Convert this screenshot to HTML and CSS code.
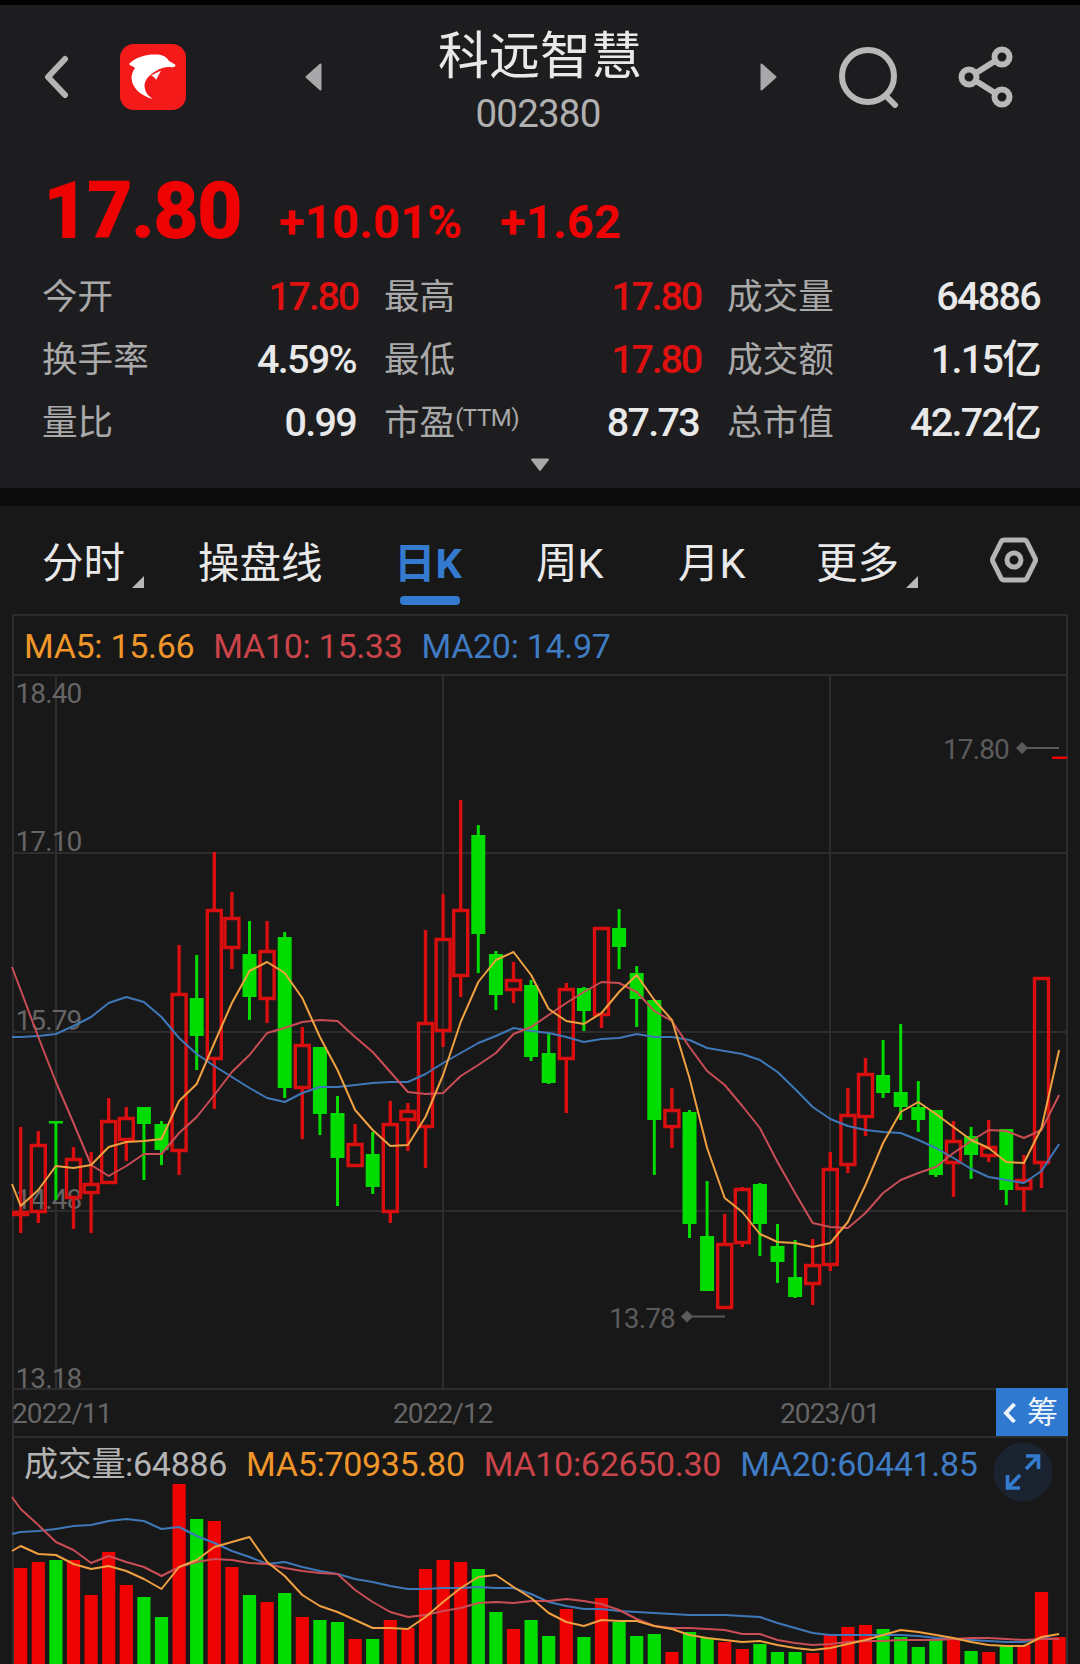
FILE: index.html
```html
<!DOCTYPE html>
<html lang="zh-CN">
<head>
    <meta charset="UTF-8">
    <meta name="viewport" content="width=device-width, initial-scale=1.0">
    <title>科远智慧 002380</title>
    <link rel="stylesheet" href="styles.css">
</head>
<body>

    <section class="quote">
        <header class="topbar">
            <svg class="back" width="26" height="44" viewBox="0 0 26 44"><path d="M21 4 L4 22 L21 40"/></svg>
            <svg class="logo" width="66" height="66" viewBox="0 0 66 66">
                <rect width="66" height="66" rx="14"/>
                <path class="dolphin" d="M9 20 C16 13 25 10.500 35 10.500 C42 10.500 46 12 49 17 C52 19 55 20 55.500 21 C55.500 23 53 23.500 50 23 C44 23 41 24 36 27 C29 31 24.500 36 24.500 42 C25 48 28 52 33 55 C21 52 12 44 11.500 34 C11.500 30 13 27 15 24 C13 22 10.500 22 9 20 Z"/>
                <path class="dolphin" d="M31 31.500 L41 26.500 L36 36 Q35 33 31 31.500 Z"/>
            </svg>
            <svg class="arrow" width="17" height="28" viewBox="0 0 17 28"><path d="M15.500 1.500 V26.500 L1.500 14 Z"/></svg>
            <div class="title">
                <h1>科远智慧</h1>
                <p>002380</p>
            </div>
            <svg class="arrow" width="17" height="28" viewBox="0 0 17 28"><path d="M1.500 1.500 V26.500 L15.500 14 Z"/></svg>
            <svg class="search" width="60" height="62" viewBox="0 0 60 62"><circle cx="29" cy="30" r="26"/><path d="M47 50 L56 59"/></svg>
            <svg class="share" width="56" height="64" viewBox="0 0 56 64">
                <circle cx="11" cy="32" r="7.500"/><circle cx="44" cy="12" r="7.500"/><circle cx="44" cy="52" r="7.500"/>
                <path d="M18 28 L37 16 M18 36 L37 48"/>
            </svg>
        </header>

        <div class="price">
            <strong>17.80</strong>
            <span class="percent">+10.01%</span>
            <span>+1.62</span>
        </div>

        <dl class="stats">
            <div><dt>今开</dt><dd class="up">17.80</dd></div>
            <div><dt>最高</dt><dd class="up">17.80</dd></div>
            <div><dt>成交量</dt><dd>64886</dd></div>
            <div><dt>换手率</dt><dd>4.59%</dd></div>
            <div><dt>最低</dt><dd class="up">17.80</dd></div>
            <div><dt>成交额</dt><dd>1.15亿</dd></div>
            <div><dt>量比</dt><dd>0.99</dd></div>
            <div><dt>市盈<sup>(TTM)</sup></dt><dd>87.73</dd></div>
            <div><dt>总市值</dt><dd>42.72亿</dd></div>
        </dl>
        <svg class="more" width="20" height="14" viewBox="0 0 20 14"><path d="M2 1.500 H18 L10 12 Z"/></svg>
    </section>

    <nav class="tabs">
        <a class="drop">分时</a>
        <a>操盘线</a>
        <a class="active">日K</a>
        <a>周K</a>
        <a>月K</a>
        <a class="drop">更多</a>
        <svg width="50" height="48" viewBox="0 0 50 48">
            <path d="M15 4 H35 Q37 4 38 6 L46 22 Q47 24 46 26 L38 42 Q37 44 35 44 H15 Q13 44 12 42 L4 26 Q3 24 4 22 L12 6 Q13 4 15 4 Z"/>
            <circle cx="25" cy="24" r="7"/>
        </svg>
    </nav>

    <main class="chart">
        <div class="legend">
            <span class="ma5">MA5: 15.66</span>
            <span class="ma10">MA10: 15.33</span>
            <span class="ma20">MA20: 14.97</span>
        </div>

        <svg id="kline" width="1056" height="712" viewBox="12 676 1056 712">
            <path class="grid" d="M12 853 H1068 M12 1032 H1068 M12 1211 H1068 M56 676 V1388 M443 676 V1388 M830 676 V1388"/>
            <g class="axis">
                <text x="15.500" y="702.500">18.40</text>
                <text x="15.500" y="850.500">17.10</text>
                <text x="15.500" y="1029.500">15.79</text>
                <text x="15.500" y="1208.500">14.48</text>
                <text x="15.500" y="1387.500">13.18</text>
            </g>
            <g class="mark">
                <text x="609" y="1327.500">13.78</text>
                <path d="M681 1316.500 l6 -6 l6 6 l-6 6 Z M687 1315.500 H725 v2 H687 Z"/>
                <text x="943" y="758.500">17.80</text>
                <path d="M1016 748 l6 -6 l6 6 l-6 6 Z M1021 747 H1059 v2 H1021 Z"/>
            </g>
        </svg>

        <div class="dates">
            <span>2022/11</span>
            <span>2022/12</span>
            <span>2023/01</span>
            <button class="chips">
                <svg width="14" height="22" viewBox="0 0 14 22"><path d="M11.500 2 L3 11 L11.500 20"/></svg>筹
            </button>
        </div>

        <div class="volume">
            <div class="legend">
                <span>成交量:64886</span>
                <span class="ma5">MA5:70935.80</span>
                <span class="ma10">MA10:62650.30</span>
                <span class="ma20">MA20:60441.85</span>
            </div>
            <svg id="vol" width="1056" height="184" viewBox="12 1480 1056 184"></svg>
            <svg class="expand" width="60" height="60" viewBox="0 0 60 60">
                <circle cx="30" cy="30" r="29.500"/>
                <path d="M33 14 H45.500 V27 M45.500 14 L33 27 M14.500 33 V46 H27 M14.500 46 L27 33"/>
            </svg>
        </div>
    </main>

    <script src="chart.js"></script>
</body>
</html>
```

FILE: styles.css
```css
* {
    box-sizing: border-box;
}

body {
    margin: 0;
    width: 1080px;
    height: 1664px;
    overflow: hidden;
    border-top: 5px solid #000;
    background-color: #181818;
    color: #e9e9ea;
    font-family: Roboto, "Noto Sans CJK SC", sans-serif;
}

svg {
    display: block;
    fill: none;
}

h1, p, dl, dd {
    margin: 0;
}

.quote {
    height: 483px;
    background-color: #1d1d1f;
}

.topbar {
    display: grid;
    grid-template-columns: 76px 185px 17px 438px 79px 119px 56px;
    align-items: center;
    height: 153px;
    padding: 0 0 9px 44px;
}

.back {
    stroke: #b4b4b5;
    stroke-width: 6;
    stroke-linecap: round;
    stroke-linejoin: round;
}

.logo rect {
    fill: #f51a1a;
}

.logo .dolphin {
    fill: #fff;
}

.arrow path, .more path {
    fill: #a8a8aa;
    stroke: #a8a8aa;
    stroke-width: 2;
    stroke-linejoin: round;
}

.title {
    text-align: center;
    padding-right: 2px;
}

.title h1 {
    padding-top: 10px;
    font-size: 51px;
    font-weight: 400;
    line-height: 60px;
}

.title p {
    margin: 3px 4px 0 0;
    color: #b0b0b1;
    font-size: 38.5px;
    line-height: 48px;
    letter-spacing: -0.8px;
}

.search {
    stroke: #b8b8b9;
    stroke-width: 6;
    stroke-linecap: round;
}

.share {
    stroke: #b8b8b9;
    stroke-width: 6;
}

.price {
    display: flex;
    align-items: baseline;
    height: 103px;
    padding-left: 43px;
    color: #ee0202;
    font-size: 47px;
    font-weight: 700;
    line-height: 106px;
    letter-spacing: 0.2px;
}

.price strong {
    width: 236px;
    font-size: 79px;
    letter-spacing: -1.8px;
}

.percent {
    width: 221px;
}

.stats {
    display: grid;
    grid-template-columns: 316px 317px 315px;
    grid-auto-rows: 63px;
    column-gap: 26px;
    padding: 4px 0 0 42px;
}

.stats div {
    display: flex;
    justify-content: space-between;
    line-height: 64px;
}

.stats dt {
    color: #a9a9aa;
    font-size: 35.6px;
    white-space: nowrap;
}

.stats sup {
    font-size: 24px;
    line-height: 0;
    letter-spacing: -0.5px;
    vertical-align: 9px;
}

.stats dd {
    padding-right: 2px;
    font-size: 39.5px;
    font-weight: 500;
    letter-spacing: -1.7px;
}

.stats .up {
    padding-right: 0;
    color: #de1010;
    letter-spacing: -2.2px;
}

.more {
    margin: 4px auto 0;
}

.tabs {
    display: grid;
    grid-template-columns: 156px 196px 142px 142px 138px 173px 50px;
    height: 126px;
    padding: 18px 0 0 42px;
    border-top: 18px solid #0c0c0c;
    font-size: 41.5px;
    line-height: 79px;
}

.tabs a {
    position: relative;
    justify-self: start;
    height: 77px;
}

.tabs .active {
    color: #347bd0;
    font-weight: 700;
}

.tabs .active::after {
    content: "";
    position: absolute;
    left: 6px;
    bottom: -4px;
    width: 60px;
    height: 9px;
    border-radius: 4px;
    background-color: #347bd0;
}

.tabs .drop::after {
    content: "";
    position: absolute;
    right: -19px;
    bottom: 13px;
    border-left: 12px solid transparent;
    border-bottom: 12px solid #b8b8b9;
}

.tabs svg {
    margin-top: 12px;
    stroke: #b4b4b5;
    stroke-width: 5;
}

.chart {
    width: 1056px;
    height: 1050px;
    margin-left: 12px;
    border: 2px solid #2d2d2e;
    border-bottom: 0;
}

.legend {
    display: flex;
    gap: 19px;
    height: 60px;
    padding-left: 10px;
    border-bottom: 2px solid #2d2d2e;
    font-size: 34px;
    line-height: 60px;
    letter-spacing: -0.3px;
    white-space: nowrap;
}

.ma5 {
    color: #f0962a;
}

.ma10 {
    color: #cb444a;
}

.ma20 {
    color: #3f7cc4;
}

#kline, #vol {
    margin-left: -2px;
    overflow: visible;
}

.grid {
    stroke: #2d2d2e;
    stroke-width: 2;
}

.axis, .mark {
    fill: #656566;
    font-size: 28px;
    letter-spacing: -0.9px;
}

.mark {
    fill: #5b5b5c;
}

.bar-up {
    fill: #ee0202;
}

.bar-down {
    fill: #00dc00;
}

.candle-up {
    stroke: #d80e0f;
    stroke-width: 3.4;
}

.candle-down {
    fill: #00dc00;
}

.line5, .line10, .line20 {
    stroke: #f0a040;
    stroke-width: 2;
    stroke-linejoin: round;
}

.line10 {
    stroke: #c94d55;
}

.line20 {
    stroke: #3f78b8;
}

.dates {
    display: grid;
    grid-template-columns: 381px 387px 216px 72px;
    width: 1056px;
    height: 50px;
    margin-left: -2px;
    border-top: 2px solid #2d2d2e;
    border-bottom: 2px solid #2d2d2e;
    color: #656566;
    font-size: 28px;
    line-height: 47px;
    letter-spacing: -0.9px;
}

.chips {
    display: flex;
    align-items: center;
    gap: 10px;
    height: 48px;
    width: 72px;
    margin-top: -2px;
    padding: 2px 0 0 7px;
    border: 0;
    background-color: #2f79d0;
    color: #eef4fb;
    font-family: inherit;
    font-size: 31px;
    line-height: 46px;
}

.chips svg {
    flex: none;
    stroke: #eef4fb;
    stroke-width: 4;
}

.volume {
    position: relative;
    color: #b4b4b5;
}

.volume .legend {
    height: 42px;
    border-bottom: 0;
    line-height: 53px;
}

.expand {
    position: absolute;
    top: 4px;
    right: 13px;
    stroke: #347bd0;
    stroke-width: 3.6;
}

.expand circle {
    fill: #1b2330;
    stroke: none;
}
```

FILE: chart.js
```javascript
const STEP = 17.6;
const FIRST = 20.7;

// high, body top, body bottom, low, direction (1 = up)
const candles = [
    [1127, 1211, 1216, 1233, 1], [1131, 1144, 1213, 1223, 1], [1121, 1121, 1123.5, 1200, 0],
    [1147, 1158, 1199, 1229, 1], [1152, 1183, 1194, 1233, 1], [1098, 1120, 1184, 1184, 1],
    [1107, 1117, 1141, 1161, 1], [1107, 1107, 1124, 1180, 0], [1121, 1124, 1150, 1165, 0],
    [945, 993, 1152, 1175, 1], [955, 998, 1036, 1070, 0], [852, 909, 1060, 1109, 1],
    [892, 917, 949, 969, 1], [921, 954, 997, 1020, 0], [921, 950, 1000, 1023, 1],
    [932, 937, 1088, 1098, 0], [1027, 1044, 1089, 1139, 1], [1047, 1047, 1114, 1135, 0],
    [1096, 1113, 1158, 1206, 0], [1124, 1143, 1167, 1167, 1], [1132, 1154, 1187, 1194, 0],
    [1101, 1123, 1213, 1223, 1], [1103, 1110, 1121, 1151, 1], [930, 1022, 1128, 1168, 1],
    [894, 938, 1032, 1047, 1], [800, 909, 977, 997, 1], [825, 835, 934, 973, 0],
    [951, 954, 995, 1010, 0], [962, 979, 991, 1003, 1], [980, 985, 1057, 1061, 0],
    [1033, 1053, 1083, 1084, 0], [983, 988, 1060, 1113, 1], [987, 988, 1011, 1031, 0],
    [927, 927, 1016, 1028, 1], [909, 928, 947, 969, 0], [966, 973, 999, 1027, 0],
    [1000, 1000, 1120, 1175, 0], [1088, 1109, 1128, 1148, 1], [1110, 1112, 1224, 1238, 0],
    [1181, 1236, 1291, 1291, 0], [1214, 1243, 1309, 1309, 1], [1187, 1188, 1244, 1247, 1],
    [1183, 1184, 1224, 1256, 0], [1224, 1246, 1262, 1283, 0], [1240, 1277, 1297, 1298, 0],
    [1239, 1264, 1285, 1305, 1], [1152, 1168, 1266, 1271, 1], [1088, 1114, 1166, 1173, 1],
    [1058, 1073, 1118, 1136, 1], [1040, 1075, 1093, 1098, 0], [1024, 1092, 1107, 1120, 0],
    [1081, 1107, 1120, 1132, 0], [1110, 1110, 1175, 1177, 0], [1121, 1140, 1164, 1197, 1],
    [1127, 1136, 1155, 1179, 0], [1120, 1146, 1157, 1162, 1], [1129, 1129, 1190, 1205, 0],
    [1155, 1179, 1190, 1212, 1], [977, 977, 1164, 1188, 1], [757, 757, 758, 758, 1]
];

const volumes = [
    1568, 1562, 1560, 1560, 1595, 1552, 1585, 1597, 1617, 1484, 1519, 1521, 1567, 1595, 1602,
    1593, 1617, 1620, 1622, 1639, 1639, 1620, 1628, 1569, 1560, 1562, 1569, 1612, 1629, 1620,
    1636, 1609, 1637, 1598, 1622, 1636, 1634, 1652, 1632, 1638, 1642, 1649, 1644, 1652, 1652,
    1653, 1635, 1627, 1625, 1629, 1637, 1647, 1640, 1640, 1651, 1652, 1646, 1645, 1592, 1637
];

// the first value of every average lies on the left border
const priceLines = {
    line20: [1037, 1037, 1036, 1034, 1026, 1017, 1003, 997, 1002, 1017, 1038, 1054, 1066, 1077, 1088,
        1098, 1102, 1093, 1087, 1087, 1085, 1083, 1082, 1082, 1074, 1063, 1053, 1043, 1036, 1028, 1031,
        1033, 1037, 1042, 1039, 1038, 1034, 1037, 1037, 1040, 1048, 1051, 1054, 1060, 1072, 1089,
        1107, 1119, 1126, 1130, 1132, 1133, 1140, 1148, 1158, 1169, 1177, 1180, 1183, 1171, 1144],
    line10: [967, 990, 1037, 1082, 1123, 1165, 1176, 1166, 1154, 1154, 1133, 1117, 1095, 1072, 1055,
        1033, 1028, 1022, 1020, 1021, 1037, 1052, 1072, 1092, 1094, 1093, 1076, 1065, 1053, 1034, 1027,
        1015, 1003, 992, 982, 983, 992, 1011, 1021, 1047, 1071, 1085, 1106, 1128, 1162, 1193,
        1223, 1227, 1228, 1213, 1193, 1180, 1173, 1167, 1153, 1141, 1130, 1131, 1138, 1130, 1095],
    line5: [1184, 1206, 1190, 1166, 1168, 1165, 1147, 1142, 1141, 1139, 1101, 1084, 1043, 1003, 971,
        962, 973, 998, 1037, 1070, 1110, 1130, 1146, 1145, 1117, 1075, 1022, 982, 960, 952, 975,
        1009, 1021, 1024, 1013, 992, 975, 1000, 1020, 1078, 1148, 1198, 1212, 1234, 1242, 1243,
        1247, 1243, 1222, 1185, 1143, 1112, 1102, 1114, 1127, 1140, 1148, 1162, 1163, 1128, 1050]
};

const volumeLines = {
    line20: [1534, 1532, 1531, 1529, 1526, 1525, 1521, 1519, 1521, 1529, 1527, 1536, 1543, 1551, 1557,
        1564, 1562, 1567, 1571, 1574, 1579, 1582, 1586, 1589, 1589, 1588, 1588, 1587, 1588, 1588, 1594,
        1602, 1606, 1609, 1609, 1611, 1612, 1613, 1614, 1615, 1615, 1615, 1616, 1617, 1623, 1628,
        1633, 1635, 1635, 1635, 1635, 1635, 1636, 1638, 1639, 1640, 1641, 1642, 1642, 1638, 1639],
    line10: [1497, 1509, 1525, 1542, 1550, 1563, 1556, 1562, 1567, 1576, 1567, 1562, 1559, 1560, 1563,
        1564, 1568, 1571, 1573, 1574, 1590, 1602, 1612, 1617, 1615, 1611, 1608, 1603, 1602, 1603, 1601,
        1601, 1599, 1601, 1604, 1610, 1619, 1626, 1628, 1628, 1629, 1630, 1634, 1634, 1640, 1643,
        1645, 1644, 1642, 1641, 1641, 1640, 1640, 1640, 1639, 1638, 1638, 1639, 1640, 1639, 1639],
    line5: [1551, 1546, 1554, 1555, 1564, 1569, 1566, 1571, 1579, 1589, 1567, 1560, 1547, 1542, 1537,
        1562, 1576, 1595, 1606, 1612, 1620, 1628, 1628, 1629, 1617, 1602, 1588, 1577, 1575, 1587, 1598,
        1613, 1622, 1626, 1620, 1621, 1621, 1626, 1629, 1635, 1638, 1640, 1642, 1641, 1645, 1648,
        1650, 1648, 1644, 1640, 1635, 1630, 1632, 1635, 1638, 1642, 1645, 1646, 1646, 1637, 1634]
};

const kline = document.getElementById('kline');
const vol = document.getElementById('vol');

function addPath(svg, className, d) {
    const path = document.createElementNS('http://www.w3.org/2000/svg', 'path');
    path.setAttribute('class', className);
    path.setAttribute('d', d);
    svg.appendChild(path);
}

function box(x, top, width, bottom) {
    return `M${x} ${top} h${width} V${bottom} h${-width} Z`;
}

function drawLines(svg, lines) {
    for (const name in lines) {
        const points = lines[name].map((y, i) => `${i === 0 ? 12 : FIRST + (i - 1) * STEP} ${y}`);
        addPath(svg, name, 'M' + points.join(' L'));
    }
}

candles.forEach(([high, top, bottom, low, up], i) => {
    const x = FIRST + i * STEP;
    if (high === 757) {
        addPath(kline, 'bar-up', box(x - 7, 756.5, 15, 759));
    } else if (up) {
        addPath(kline, 'candle-up', box(x - 7, top + 1.5, 14, bottom - 1.5) +
            `M${x} ${high} V${top} M${x} ${bottom} V${low}`);
    } else {
        addPath(kline, 'candle-down', box(x - 7, top, 14, bottom) + box(x - 1.5, high, 3, low));
    }
    addPath(vol, up ? 'bar-up' : 'bar-down', box(x - 6.6, volumes[i], 13.2, 1664));
});

drawLines(kline, priceLines);
drawLines(vol, volumeLines);
```
